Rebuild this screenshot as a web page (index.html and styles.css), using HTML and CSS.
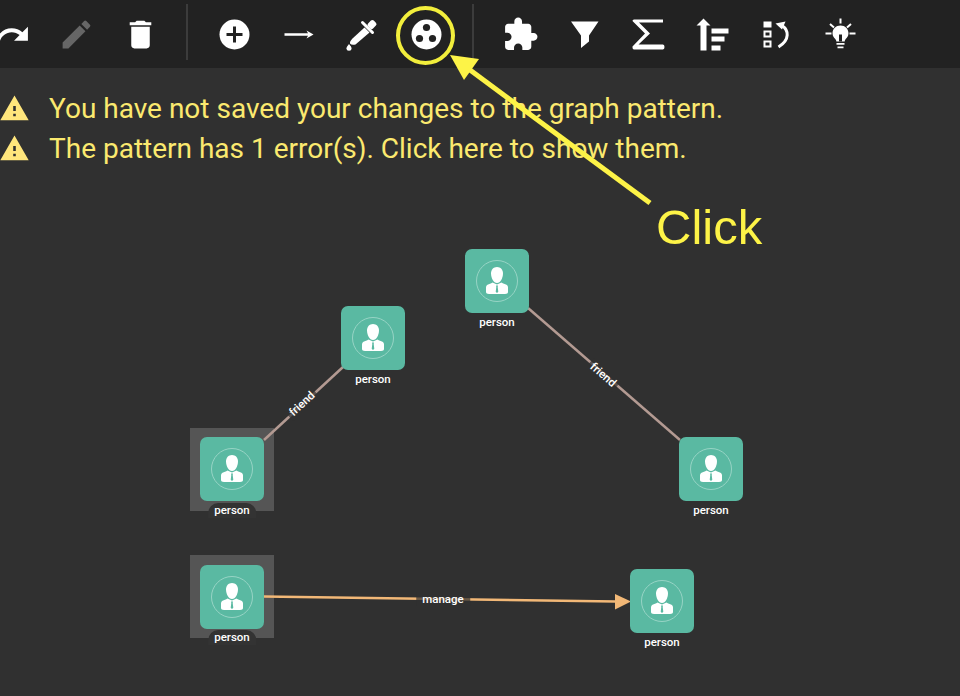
FILE: index.html
```
<!DOCTYPE html>
<html lang="en">
<head>
<meta charset="utf-8">
<title>Graph pattern editor</title>
<link rel="stylesheet" href="styles.css">
</head>
<body>
<svg class="defs" width="0" height="0" aria-hidden="true">
  <symbol id="person" viewBox="0 0 64 64">
    <circle cx="32" cy="32" r="20.500" fill="none" stroke="#97d4c5" stroke-width="1"/>
    <path fill="#fff" d="M32 18c3.600 0 6 2.800 6 6.400 0 4.300-2.600 9.600-6 9.600s-6-5.300-6-9.600c0-3.600 2.400-6.400 6-6.400z"/>
    <path fill="#fff" d="M27.500 33.500c-1.500 1-3.500 1.500-5 2.300-1 .6-1.500 1.500-1.500 2.800v4.400c0 1 1 2 3 2h16c2 0 3-1 3-2v-4.400c0-1.300-.5-2.200-1.500-2.800-1.500-.8-3.500-1.300-5-2.300L32 35.500z"/>
    <path fill="#5ab9a2" d="M31 36.500h2l-.3 1.500.6 4.700-1.300 1.300-1.300-1.300.6-4.700z"/>
  </symbol>
</svg>
<div class="page">
  <header class="toolbar">
    <div class="tool"><svg class="icon" viewBox="0 0 24 24"><path d="M18.400 10.600C16.550 8.990 14.150 8 11.500 8c-4.650 0-8.580 3.030-9.960 7.220L3.900 16c1.050-3.190 4.050-5.500 7.600-5.500 1.950 0 3.730.72 5.120 1.880L13 16h9V7l-3.600 3.600z"/></svg></div>
    <div class="tool"><svg class="icon icon-off" viewBox="0 0 24 24"><path d="M3 17.250V21h3.750L17.810 9.940l-3.750-3.750L3 17.250zM20.710 7.040a1 1 0 0 0 0-1.410l-2.340-2.340a1 1 0 0 0-1.410 0l-1.830 1.830 3.750 3.750 1.830-1.830z"/></svg></div>
    <div class="tool"><svg class="icon" viewBox="0 0 24 24"><path d="M6 19c0 1.100.9 2 2 2h8c1.100 0 2-.9 2-2V7H6v12zM19 4h-3.500l-1-1h-5l-1 1H5v2h14V4z"/></svg></div>
    <div class="sep"></div>
    <div class="tool"><svg class="icon" viewBox="0 0 37 37"><circle cx="18.500" cy="18.500" r="15"/><path d="M10.500 18.500h16M18.500 10.500v16" stroke="#222" stroke-width="3" fill="none"/></svg></div>
    <div class="tool"><svg class="icon" viewBox="0 0 37 37"><path d="M4.500 17.200H28L26.500 14.500l7 4-7 4L28 19.800H4.500z"/></svg></div>
    <div class="tool"><svg class="icon" viewBox="0 0 37 37"><g transform="translate(2.500 2.500)"><rect x="22" y="2" width="7" height="8" rx="2" transform="rotate(45 25.500 6)"/><path d="M16 4l10 10" stroke="#fff" stroke-width="3" stroke-linecap="round" fill="none"/><path d="M18 9l5 5L9 26Q5 27 3.500 25q-.5-2 2.500-5z"/><path d="M2.500 25.500c1.800 2.200 2.500 3.300 2.500 4.300a2.500 2.500 0 0 1-5 0c0-1 .8-2.100 2.500-4.300z"/></g></svg></div>
    <div class="tool"><svg class="icon" viewBox="0 0 37 37"><circle cx="18.500" cy="18.500" r="15"/><circle cx="18.500" cy="11.500" r="3.600" fill="#222"/><circle cx="11.500" cy="22.500" r="3.600" fill="#222"/><circle cx="24.500" cy="22.500" r="3.600" fill="#222"/></svg></div>
    <div class="sep"></div>
    <div class="tool"><svg class="icon" viewBox="0 0 24 24"><path d="M20.500 11H19V7c0-1.100-.9-2-2-2h-4V3.500C13 2.120 11.880 1 10.500 1S8 2.120 8 3.500V5H4c-1.100 0-1.990.9-1.990 2v3.800H3.500c1.490 0 2.700 1.210 2.700 2.700s-1.210 2.700-2.700 2.700H2V20c0 1.100.9 2 2 2h3.800v-1.500c0-1.490 1.210-2.700 2.700-2.700 1.490 0 2.700 1.210 2.700 2.700V22H17c1.100 0 2-.9 2-2v-4h1.500c1.380 0 2.500-1.120 2.500-2.500S21.880 11 20.500 11z"/></svg></div>
    <div class="tool"><svg class="icon" viewBox="0 0 37 37"><path d="M5 5.500h27.500L23 19.500v6l-8 6.500V19.500z"/></svg></div>
    <div class="tool"><svg class="icon" viewBox="0 0 37 37"><path d="M4 3.500h29v3H9l11 11-11.500 11H33q1.500.2 1.500 2.500T33 33.500H4q-1.500 0-1.500-2v-1L15 17.500 2.500 5q0-1.500 1.500-1.500z"/></svg></div>
    <div class="tool"><svg class="icon" viewBox="0 0 37 37"><path d="M2.500 9.500l7-7 7 7h-4v25h-6v-25z"/><path d="M17.500 12.500h17v5h-17zM17.500 20.500h13v5h-13zM17.500 29.500h9v5h-9z"/></svg></div>
    <div class="tool"><svg class="icon" viewBox="0 0 37 37"><path d="M5.500 5.500h8v6h-8z"/><path d="M6.500 15.500h6v5h-6zM6.500 25.500h6v5h-6z" fill="none" stroke="#fff" stroke-width="2"/><path d="M24 9.500c6.500 4.500 8.500 14 -3.500 21.500" fill="none" stroke="#fff" stroke-width="3"/><path d="M17.500 7.500l10-2-3.500 8z"/></svg></div>
    <div class="tool"><svg class="icon" viewBox="0 0 37 37"><path d="M18.500 9.500c4.500 0 8 3.300 8 7.800 0 2.800-1.600 4.300-2.800 5.800-.7 1-1 1.600-1 2.400h-8.400c0-.8-.3-1.400-1-2.400-1.200-1.500-2.800-3-2.800-5.800 0-4.500 3.500-7.800 8-7.800z"/><path d="M17 25.500v-7h3v7z" fill="#222"/><path d="M14.500 27h8v1.800h-8zM15.500 30.500h6v1.800h-6z"/><path d="M18.500 2.500v5M8 8l4 3.500M29 8l-4 3.500M3.500 17.500h6M27.500 17.500h6" stroke="#fff" stroke-width="2" fill="none"/></svg></div>
  </header>

  <section class="messages">
    <div class="message"><svg class="warn" viewBox="0 0 24 24"><path d="M1 21h22L12 2 1 21zm12-3h-2v-2h2v2zm0-4h-2v-4h2v4z"/></svg><span>You have not saved your changes to the graph pattern.</span></div>
    <div class="message"><svg class="warn" viewBox="0 0 24 24"><path d="M1 21h22L12 2 1 21zm12-3h-2v-2h2v2zm0-4h-2v-4h2v4z"/></svg><span>The pattern has 1 error(s). Click here to show them.</span></div>
  </section>

  <div class="selection sel-c"></div>
  <div class="selection sel-e"></div>

  <svg class="edges" viewBox="0 0 960 696" width="960" height="696">
    <line x1="343" y1="367" x2="264" y2="440" class="edge-friend"/>
    <line x1="528" y1="308" x2="680" y2="440" class="edge-friend"/>
    <line x1="264" y1="596.500" x2="616" y2="601.500" class="edge-manage"/>
    <path class="arrowhead" d="M615 594l16 7.500-16 8z"/>
  </svg>

  <span class="edge-label lbl-f1">friend</span>
  <span class="edge-label lbl-f2">friend</span>
  <span class="edge-label lbl-m">manage</span>

  <div class="node node-a"><svg class="avatar"><use href="#person"/></svg><span class="node-label">person</span></div>
  <div class="node node-b"><svg class="avatar"><use href="#person"/></svg><span class="node-label">person</span></div>
  <div class="node node-c"><svg class="avatar"><use href="#person"/></svg><span class="node-label pill">person</span></div>
  <div class="node node-d"><svg class="avatar"><use href="#person"/></svg><span class="node-label">person</span></div>
  <div class="node node-e"><svg class="avatar"><use href="#person"/></svg><span class="node-label pill">person</span></div>
  <div class="node node-f"><svg class="avatar"><use href="#person"/></svg><span class="node-label">person</span></div>

  <svg class="annotation" viewBox="0 0 960 696" width="960" height="696">
    <circle cx="425.500" cy="35.500" r="27.500" fill="none" stroke="#f2ee3c" stroke-width="4"/>
    <line x1="650" y1="203" x2="466" y2="67" stroke="#fdf347" stroke-width="5"/>
    <path fill="#fdf347" d="M450 55l29 4-15 21z"/>
  </svg>
  <span class="click-label">Click</span>
</div>
</body>
</html>
```
FILE: styles.css
```
* { box-sizing: border-box; }
html, body { margin: 0; padding: 0; background: #303030; }
.defs { position: absolute; }
.page {
  position: relative;
  width: 960px;
  height: 696px;
  overflow: hidden;
  background: #303030;
  font-family: Roboto, "Liberation Sans", sans-serif;
}
.toolbar {
  display: flex;
  align-items: center;
  height: 68px;
  margin-left: -20px;
  background: #222;
}
.tool {
  flex: 0 0 64px;
  height: 64px;
  display: flex;
  align-items: center;
  justify-content: center;
}
.icon { width: 37px; height: 37px; fill: #fff; flex: none; }
.icon-off { fill: #666; }
.sep {
  flex: 0 0 30px;
  height: 56px;
  margin-bottom: 4px;
  display: flex;
  justify-content: center;
}
.sep::before { content: ""; width: 2px; background: #3c3c3c; }
.messages { display: flex; flex-direction: column; gap: 2px; padding-top: 21px; }
.message {
  display: flex;
  align-items: center;
  gap: 19px;
  height: 38px;
  margin-left: -1px;
  font-size: 28px;
  color: #fbe96f;
  white-space: nowrap;
}
.warn { width: 31px; height: 31px; fill: #ffe67c; flex: none; }
.selection { position: absolute; width: 84px; height: 83px; background: #555; }
.sel-c { left: 190px; top: 428px; }
.sel-e { left: 190px; top: 555px; }
.edges, .annotation { position: absolute; left: 0; top: 0; pointer-events: none; }
.edge-friend { stroke: #b39a92; stroke-width: 2.500; }
.edge-manage { stroke: #f2b877; stroke-width: 2.500; }
.arrowhead { fill: #f2b877; }
.edge-label {
  position: absolute;
  font-size: 11.500px;
  font-weight: 500;
  line-height: 13px;
  padding: 0 3px;
  color: #fff;
  background: rgba(48, 48, 48, .7);
  transform: translate(-50%, -50%);
}
.lbl-f1 { left: 302px; top: 404px; transform: translate(-50%, -50%) rotate(-43deg); }
.lbl-f2 { left: 603px; top: 375px; transform: translate(-50%, -50%) rotate(41deg); }
.lbl-m { left: 443px; top: 599px; padding: 0 6px; }
.node { position: absolute; width: 64px; height: 64px; border-radius: 7px; background: #5ab9a2; }
.avatar { display: block; width: 64px; height: 64px; }
.node-label {
  position: absolute;
  left: 50%;
  top: 66px;
  transform: translateX(-50%);
  font-size: 11.500px;
  font-weight: 500;
  line-height: 15px;
  color: #fff;
}
.pill {
  background: #333;
  padding: 0 6px;
  border-radius: 10px 10px 0 0;
}
.node-a { left: 465px; top: 249px; }
.node-b { left: 341px; top: 306px; }
.node-c { left: 200px; top: 437px; }
.node-d { left: 679px; top: 437px; }
.node-e { left: 200px; top: 565px; }
.node-e .node-label { top: 65px; }
.node-f { left: 630px; top: 569px; }
.click-label {
  position: absolute;
  left: 656px;
  top: 200px;
  font-family: "Liberation Sans", Arial, sans-serif;
  font-size: 49px;
  line-height: 54px;
  color: #fdf347;
}
```
